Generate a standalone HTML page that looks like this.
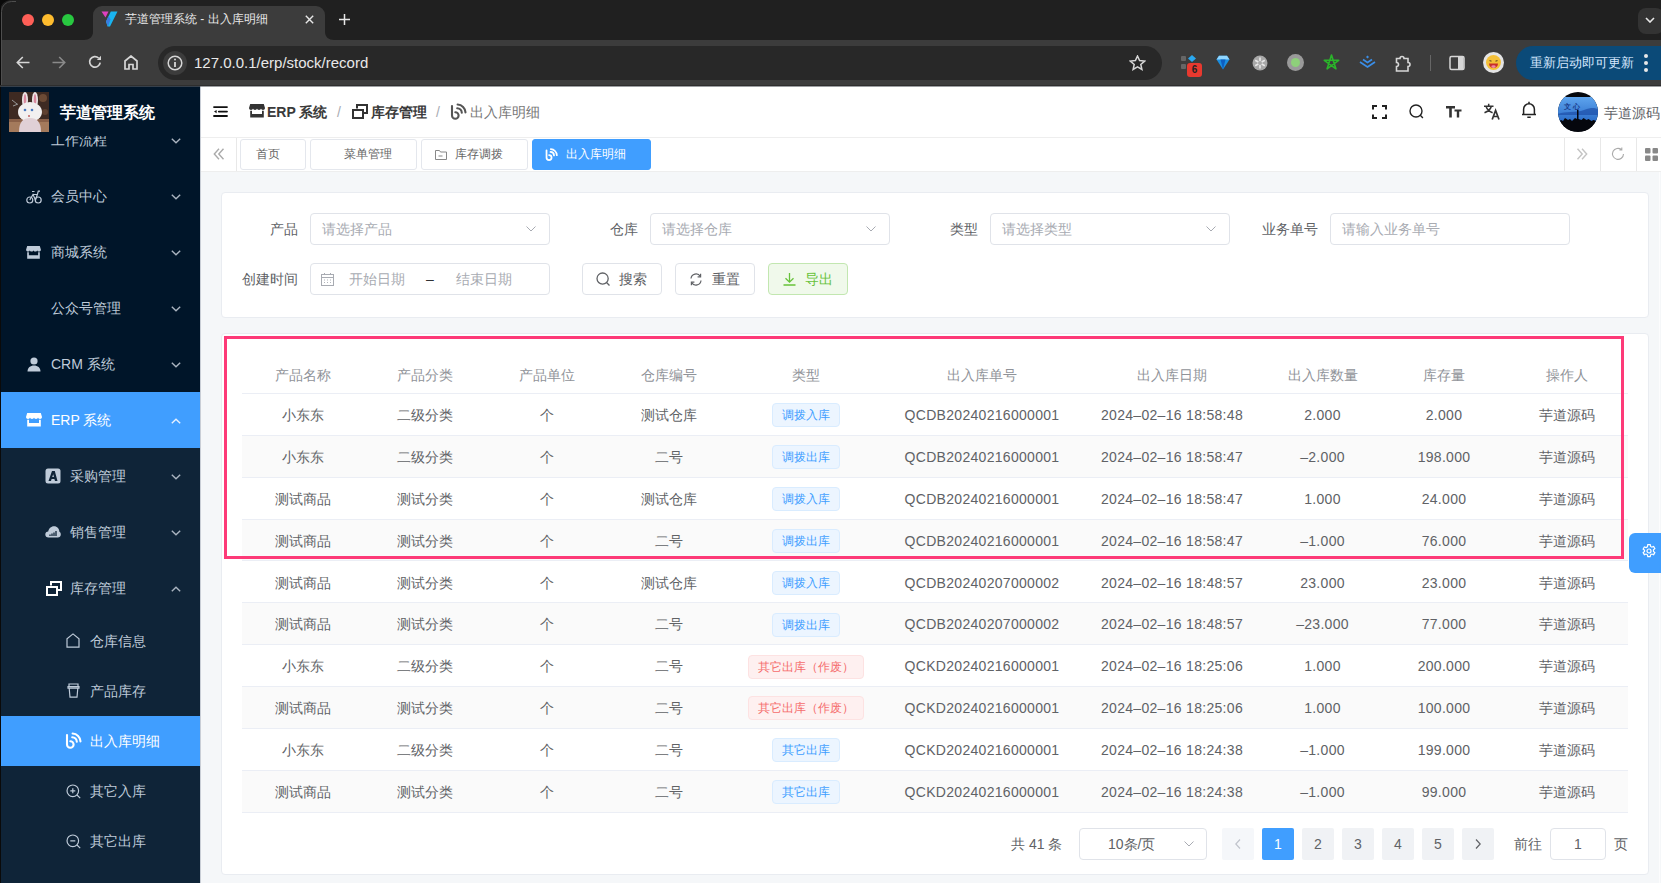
<!DOCTYPE html>
<html><head><meta charset="utf-8">
<style>
*{box-sizing:border-box;margin:0;padding:0}
html,body{width:1661px;height:883px;overflow:hidden}
body{position:relative;background:#f5f7f9;font-family:"Liberation Sans",sans-serif;font-size:14px;color:#606266}
.a{position:absolute}
.ic{position:absolute;display:block}
/* chrome */
#tabbar{left:0;top:0;width:1661px;height:40px;background:#202020}
#toolbar{left:0;top:40px;width:1661px;height:46px;background:#3c3c3c}
/* sidebar */
#side{left:0;top:86px;width:200px;height:797px;background:#001529;overflow:hidden}
.mi{position:absolute;left:1px;width:199px;height:56px;color:#bfcbd9;font-size:14px;line-height:56px}
.sub{background:#0f2438}
.act{background:#409eff;color:#fff}
.mt{position:absolute;white-space:nowrap}
.chev{position:absolute;left:170px;top:26px;width:10px;height:6px}
/* header */
#hdr{left:201px;top:86px;width:1460px;height:52px;background:#fff;border-bottom:1px solid #eee}
#tags{left:201px;top:138px;width:1460px;height:34px;background:#fff;border-bottom:1px solid #eee}
.bc{top:16px;font-size:14px;font-weight:bold;line-height:20px;white-space:nowrap}
.tag{position:absolute;top:1px;height:31px;border:1px solid #e4e7ed;border-radius:3px;font-size:12px;line-height:29px;color:#666;background:#fff}
/* cards */
.card{position:absolute;background:#fff;border:1px solid #e9ecf1;border-radius:4px}
.lbl{position:absolute;font-size:14px;color:#606266;text-align:right;height:32px;line-height:32px;width:68px;padding-right:12px}
.inp{position:absolute;height:32px;width:240px;border:1px solid #e0e3e9;border-radius:4px;background:#fff}
.ph{position:absolute;left:11px;top:0;line-height:30px;font-size:14px;color:#a8abb2;white-space:nowrap}
.btn{position:absolute;height:32px;width:80px;border:1px solid #e0e3e9;border-radius:4px;background:#fff;font-size:14px;color:#606266;line-height:30px}
/* table */
.row{position:absolute;left:242px;width:1386px;height:42px;border-bottom:1px solid #ebeef5}
.row.str{background:#fafafa}
.c{position:absolute;top:0;height:42px;line-height:42px;text-align:center;white-space:nowrap;font-size:14px;color:#606266}
.hd .c{color:#909399;font-weight:500;top:2px}
.dt{display:inline-block;height:24px;line-height:22px;padding:0 9px;font-size:12px;border:1px solid #d9ecff;background:#ecf5ff;color:#409eff;border-radius:4px;vertical-align:middle;position:relative;top:-1px}
.dt.red{border-color:#fde2e2;background:#fef0f0;color:#f56c6c}
.pg{position:absolute;top:828px;width:32px;height:32px;border-radius:2px;background:#f0f2f5;color:#606266;font-size:14px;text-align:center;line-height:32px;font-weight:normal}
</style></head><body>

<!-- ============ BROWSER CHROME ============ -->
<!--CHROME-->
<div id="tabbar" class="a">
 <div class="a" style="left:22px;top:14px;width:12px;height:12px;border-radius:50%;background:#fe5f57"></div>
 <div class="a" style="left:42px;top:14px;width:12px;height:12px;border-radius:50%;background:#febc2e"></div>
 <div class="a" style="left:62px;top:14px;width:12px;height:12px;border-radius:50%;background:#28c840"></div>
 <!-- active tab -->
 <svg class="ic" style="left:84px;top:6px" width="250" height="34" viewBox="0 0 250 34"><path d="M0 34C5 34 9 31 9 26V9A9 9 0 0 1 18 0H232A9 9 0 0 1 241 9V26C241 31 245 34 250 34Z" fill="#3c3c3c"/></svg>
 <svg class="ic" style="left:101px;top:11px" width="17" height="16" viewBox="0 0 17 16"><path d="M0.5 0.5h7L4.5 6.5z" fill="#e040c0"/><path d="M9.8 0.5h6.7L9 15.5H6.5L5 10.5z" fill="#19b4f0"/><path d="M5 10.5L7.5 5l2 3.5L7 15.5z" fill="#3a7be0"/></svg>
 <div class="a" style="left:125px;top:11px;font-size:12px;color:#e8e8e8;line-height:17px;white-space:nowrap">芋道管理系统 - 出入库明细</div>
 <svg class="ic" style="left:305px;top:15px" width="9" height="9" viewBox="0 0 9 9"><path d="M0.8 0.8l7.4 7.4M8.2 0.8L0.8 8.2" stroke="#e8e8e8" stroke-width="1.4"/></svg>
 <svg class="ic" style="left:339px;top:14px" width="11" height="11" viewBox="0 0 11 11"><path d="M5.5 0v11M0 5.5h11" stroke="#e8e8e8" stroke-width="1.5"/></svg>
 <div class="a" style="left:1638px;top:8px;width:26px;height:26px;border-radius:8px;background:#333"></div>
 <svg class="ic" style="left:1645px;top:17px" width="10" height="6" viewBox="0 0 10 6"><path d="M1 1l4 4 4-4" fill="none" stroke="#e8e8e8" stroke-width="1.6"/></svg>
</div>
<div id="toolbar" class="a">
 <svg class="ic" style="left:16px;top:16px" width="14" height="13" viewBox="0 0 14 13" fill="none" stroke="#d6d6d6" stroke-width="1.6"><path d="M13.5 6.5H1.5M6.8 1L1.3 6.5l5.5 5.5"/></svg>
 <svg class="ic" style="left:52px;top:16px" width="14" height="13" viewBox="0 0 14 13" fill="none" stroke="#8a8a8a" stroke-width="1.6"><path d="M0.5 6.5h12M7.2 1l5.5 5.5-5.5 5.5"/></svg>
 <svg class="ic" style="left:88px;top:15px" width="14" height="14" viewBox="0 0 14 14" fill="none" stroke="#d6d6d6" stroke-width="1.7"><path d="M12.2 7.6A5.3 5.3 0 1 1 10.6 3"/><path d="M13 0.8v4.2H8.8z" fill="#d6d6d6" stroke="none"/></svg>
 <svg class="ic" style="left:124px;top:15px" width="14" height="15" viewBox="0 0 14 15" fill="none" stroke="#d6d6d6" stroke-width="1.7"><path d="M1 14V6L7 1l6 5v8H9V9.5H5V14z"/></svg>
 <div class="a" style="left:158px;top:6px;width:1004px;height:34px;border-radius:17px;background:#282828"></div>
 <div class="a" style="left:163px;top:11px;width:24px;height:24px;border-radius:50%;background:#3c3c3c"></div>
 <svg class="ic" style="left:167px;top:15px" width="16" height="16" viewBox="0 0 16 16" fill="none" stroke="#d6d6d6" stroke-width="1.5"><circle cx="8" cy="8" r="6.8"/><path d="M8 7v5" stroke-width="1.8"/><circle cx="8" cy="4.6" r="1" fill="#d6d6d6" stroke="none"/></svg>
 <div class="a" style="left:194px;top:13px;font-size:15px;color:#e8e8e8;line-height:19px;white-space:nowrap">127.0.0.1/erp/stock/record</div>
 <svg class="ic" style="left:1129px;top:15px" width="17" height="16" viewBox="0 0 17 16" fill="none" stroke="#d6d6d6" stroke-width="1.5"><path d="M8.5 1l2.1 4.6 5 0.5-3.8 3.3 1.1 5L8.5 11.8 4.1 14.4l1.1-5L1.4 6.1l5-0.5z"/></svg>
 <!-- extensions -->
 <div class="a" style="left:1181px;top:16px;width:5px;height:5px;border-radius:1px;background:#666"></div>
 <div class="a" style="left:1181px;top:24px;width:5px;height:5px;border-radius:1px;background:#666"></div>
 <svg class="ic" style="left:1188px;top:15px" width="8" height="7" viewBox="0 0 8 7"><path d="M4 0L8 3.5 4 7 0 3.5z" fill="#2aa8f0"/></svg>
 <div class="a" style="left:1187px;top:23px;width:15px;height:14px;border-radius:3px;background:#e8392f;color:#222;font-size:10px;font-weight:bold;text-align:center;line-height:14px">6</div>
 <svg class="ic" style="left:1216px;top:15px" width="14" height="15" viewBox="0 0 14 15"><path d="M0.5 4.5L3 0.8h8l2.5 3.7L7 14.5z" fill="#1a8ee0"/><path d="M3 0.8h8l2.5 3.7h-13z" fill="#8fd6ff"/><path d="M4.5 4.5L7 14.5 9.5 4.5z" fill="#0e5ec0"/></svg>
 <svg class="ic" style="left:1252px;top:15px" width="16" height="16" viewBox="0 0 16 16"><circle cx="8" cy="8" r="7.5" fill="#a8a8a8"/><path d="M8 2.5v11M3.2 5.2l9.6 5.6M3.2 10.8l9.6-5.6" stroke="#e8e8e8" stroke-width="1.6"/><circle cx="8" cy="8" r="2" fill="#a8a8a8"/></svg>
 <div class="a" style="left:1287px;top:14px;width:17px;height:17px;border-radius:50%;background:#9a9a9a"></div>
 <div class="a" style="left:1291px;top:18px;width:9px;height:9px;border-radius:50%;background:#8ed07a"></div>
 <svg class="ic" style="left:1323px;top:14px" width="17" height="17" viewBox="0 0 17 17" fill="none" stroke="#2ab52a" stroke-width="1.6" stroke-linejoin="round"><path d="M8.5 1L12.9 14.8 1.3 6.3H15.7L4.1 14.8Z"/></svg>
 <svg class="ic" style="left:1359px;top:15px" width="17" height="15" viewBox="0 0 17 15" fill="none" stroke="#3a8ee8" stroke-width="1.7"><path d="M1 7l7.5 5L16 7M4 4.5l4.5 3 4.5-3"/><path d="M8.5 0.5l1.5 1.5-1.5 1.5L7 2z" fill="#3a8ee8" stroke="none"/></svg>
 <svg class="ic" style="left:1395px;top:14px" width="18" height="18" viewBox="0 0 18 18" fill="none" stroke="#d6d6d6" stroke-width="1.6"><path d="M1.5 4.5h3.5a2 2 0 0 1 4 0h4v4a2 2 0 0 1 0 4v4.5H1.5V12.5a2 2 0 0 0 0-4z"/></svg>
 <div class="a" style="left:1430px;top:15px;width:1px;height:16px;background:#666"></div>
 <svg class="ic" style="left:1449px;top:15px" width="16" height="16" viewBox="0 0 16 16"><rect x="1" y="1.5" width="14" height="13" rx="1.5" fill="none" stroke="#d6d6d6" stroke-width="1.5"/><rect x="9" y="2" width="5.5" height="12" fill="#d6d6d6"/></svg>
 <svg class="ic" style="left:1483px;top:12px" width="21" height="21" viewBox="0 0 21 21"><circle cx="10.5" cy="10.5" r="10.5" fill="#e4e4e4"/><circle cx="10.5" cy="10.5" r="7.5" fill="#f4c038"/><path d="M6.5 8.5l2 0.8M14.5 8.5l-2 0.8" stroke="#6a4a1a" stroke-width="1.1"/><path d="M6 11.5h9c0 2.8-2 4.6-4.5 4.6S6 14.3 6 11.5z" fill="#c8302a"/><ellipse cx="10.5" cy="14.6" rx="2.2" ry="1.4" fill="#f08aa0"/></svg>
 <div class="a" style="left:1516px;top:6px;width:160px;height:34px;border-radius:17px;background:#0b4a78"></div>
 <div class="a" style="left:1530px;top:13px;font-size:13px;color:#d6e8ff;line-height:19px;white-space:nowrap;font-weight:500">重新启动即可更新</div>
 <div class="a" style="left:1644px;top:14px;width:4px;height:4px;border-radius:50%;background:#e8e8e8"></div>
 <div class="a" style="left:1644px;top:21px;width:4px;height:4px;border-radius:50%;background:#e8e8e8"></div>
 <div class="a" style="left:1644px;top:28px;width:4px;height:4px;border-radius:50%;background:#e8e8e8"></div>
</div>
<!--/CHROME-->

<!-- ============ SIDEBAR ============ -->
<!--SIDE-->
<div id="side" class="a">
 <!-- menu (scrolled) -->
 <div class="mi" style="top:26px"><span class="mt" style="left:50px">工作流程</span><svg class="chev" viewBox="0 0 10 6"><path d="M0.8 0.8L5 4.8L9.2 0.8" fill="none" stroke="#aab4c0" stroke-width="1.4"/></svg></div>
 <div class="mi" style="top:82px">
  <svg class="ic" style="left:25px;top:22px" width="16" height="14" viewBox="0 0 16 14" fill="none" stroke="#bfcbd9" stroke-width="1.2"><circle cx="3.8" cy="10" r="3"/><circle cx="12.2" cy="10" r="3"/><path d="M3.8 10L7 4.5L9.5 10L11.5 4M6 1.5h2.5M11.5 4l0.8-2.8h1.7M7 4.5h4.5"/></svg>
  <span class="mt" style="left:50px">会员中心</span><svg class="chev" viewBox="0 0 10 6"><path d="M0.8 0.8L5 4.8L9.2 0.8" fill="none" stroke="#aab4c0" stroke-width="1.4"/></svg></div>
 <div class="mi" style="top:138px">
  <svg class="ic" style="left:25px;top:22px" width="15" height="13" viewBox="0 0 16 14" fill="#bfcbd9"><path d="M1.2 0H14.8L16 4C16 5.2 15 6 14 6S12 5.3 12 4.6C12 5.3 11 6 10 6S8 5.3 8 4.6C8 5.3 7 6 6 6S4 5.3 4 4.6C4 5.3 3 6 2 6S0 5.2 0 4Z"/><path d="M1.2 6.8H3V10H13V6.8H14.8V13.6H1.2Z"/></svg>
  <span class="mt" style="left:50px">商城系统</span><svg class="chev" viewBox="0 0 10 6"><path d="M0.8 0.8L5 4.8L9.2 0.8" fill="none" stroke="#aab4c0" stroke-width="1.4"/></svg></div>
 <div class="mi" style="top:194px"><span class="mt" style="left:50px">公众号管理</span><svg class="chev" viewBox="0 0 10 6"><path d="M0.8 0.8L5 4.8L9.2 0.8" fill="none" stroke="#aab4c0" stroke-width="1.4"/></svg></div>
 <div class="mi" style="top:250px">
  <svg class="ic" style="left:26px;top:21px" width="14" height="15" viewBox="0 0 14 15" fill="#bfcbd9"><circle cx="7" cy="4" r="3.6"/><path d="M0.5 14.5c0-3.8 2.8-6 6.5-6s6.5 2.2 6.5 6z"/></svg>
  <span class="mt" style="left:50px">CRM 系统</span><svg class="chev" viewBox="0 0 10 6"><path d="M0.8 0.8L5 4.8L9.2 0.8" fill="none" stroke="#aab4c0" stroke-width="1.4"/></svg></div>
 <div class="mi act" style="top:306px">
  <svg class="ic" style="left:25px;top:21px" width="16" height="14" viewBox="0 0 16 14" fill="#fff"><path d="M1.2 0H14.8L16 4C16 5.2 15 6 14 6S12 5.3 12 4.6C12 5.3 11 6 10 6S8 5.3 8 4.6C8 5.3 7 6 6 6S4 5.3 4 4.6C4 5.3 3 6 2 6S0 5.2 0 4Z"/><path d="M1.2 6.8H3V10H13V6.8H14.8V13.6H1.2Z"/></svg>
  <span class="mt" style="left:50px">ERP 系统</span><svg class="chev" viewBox="0 0 10 6"><path d="M0.8 5.2L5 1.2L9.2 5.2" fill="none" stroke="#e6f0ff" stroke-width="1.4"/></svg></div>
 <div class="sub a" style="left:1px;top:362px;width:199px;height:440px"></div>
 <div class="mi" style="top:362px">
  <svg class="ic" style="left:44px;top:20px" width="16" height="16" viewBox="0 0 16 16"><rect x="0.5" y="0.5" width="15" height="15" rx="2.5" fill="#bfcbd9"/><path d="M3.5 13L7 3h2.8L12.5 13H10l-0.6-2H6.6L6 13z M7.2 9h1.8L8.2 6.2z" fill="#0f2438" fill-rule="evenodd"/></svg>
  <span class="mt" style="left:69px">采购管理</span><svg class="chev" viewBox="0 0 10 6"><path d="M0.8 0.8L5 4.8L9.2 0.8" fill="none" stroke="#aab4c0" stroke-width="1.4"/></svg></div>
 <div class="mi" style="top:418px">
  <svg class="ic" style="left:44px;top:21px" width="16" height="13" viewBox="0 0 16 13"><path d="M3.5 12.5C1.6 12.5 0.3 11.2 0.3 9.5S1.6 6.6 3.2 6.6C3.8 3.5 6 1.2 9 1.2c3.3 0 5.4 2.6 5.4 5.6c1 0.4 1.4 1.5 1.4 2.7c0 1.7-1.3 3-3 3z" fill="#bfcbd9"/><path d="M5 11V9.6M7 11V8.6M9 11V7.4M11 11V6" stroke="#0f2438" stroke-width="1.3"/></svg>
  <span class="mt" style="left:69px">销售管理</span><svg class="chev" viewBox="0 0 10 6"><path d="M0.8 0.8L5 4.8L9.2 0.8" fill="none" stroke="#aab4c0" stroke-width="1.4"/></svg></div>
 <div class="mi" style="top:474px">
  <svg class="ic" style="left:45px;top:21px" width="16" height="15" viewBox="0 0 16 15" fill="none" stroke="#fff" stroke-width="2"><path d="M5 4.5V1h10v8h-4"/><rect x="1" y="6" width="10" height="8"/></svg>
  <span class="mt" style="left:69px">库存管理</span><svg class="chev" viewBox="0 0 10 6"><path d="M0.8 5.2L5 1.2L9.2 5.2" fill="none" stroke="#aab4c0" stroke-width="1.4"/></svg></div>
 <div class="mi" style="top:530px;height:50px;line-height:50px">
  <svg class="ic" style="left:65px;top:17px" width="14" height="15" viewBox="0 0 14 15" fill="none" stroke="#bfcbd9" stroke-width="1.2"><path d="M1 14.2V5.8L7 0.9l6 4.9v8.4z"/></svg>
  <span class="mt" style="left:89px">仓库信息</span></div>
 <div class="mi" style="top:580px;height:50px;line-height:50px">
  <svg class="ic" style="left:66px;top:17px" width="13" height="15" viewBox="0 0 13 15" fill="none" stroke="#bfcbd9" stroke-width="1.2"><path d="M2 1h9v2.6H2z M1 3.6h11v1.6H1z M2.2 5.2L3 14.2h7l0.8-9"/></svg>
  <span class="mt" style="left:89px">产品库存</span></div>
 <div class="mi act" style="top:630px;height:50px;line-height:50px">
  <svg class="ic" style="left:64px;top:16px" width="17" height="17" viewBox="0 0 17 17" fill="none" stroke="#fff" stroke-width="2.1" stroke-linecap="round"><path d="M2 3v9.5a3.3 3.3 0 1 0 3.3-3.3"/><path d="M7.2 5.2a4.8 4.8 0 0 1 4.6 4.6"/><path d="M7.6 1.5a8.3 8.3 0 0 1 7.9 7.9"/></svg>
  <span class="mt" style="left:89px">出入库明细</span></div>
 <div class="mi" style="top:680px;height:50px;line-height:50px">
  <svg class="ic" style="left:65px;top:18px" width="15" height="15" viewBox="0 0 15 15" fill="none" stroke="#bfcbd9" stroke-width="1.2"><circle cx="6.8" cy="6.8" r="5.8"/><path d="M11 11l3.2 3.2M4.3 6.8h5M6.8 4.3v5"/></svg>
  <span class="mt" style="left:89px">其它入库</span></div>
 <div class="mi" style="top:730px;height:50px;line-height:50px">
  <svg class="ic" style="left:65px;top:18px" width="15" height="15" viewBox="0 0 15 15" fill="none" stroke="#bfcbd9" stroke-width="1.2"><circle cx="6.8" cy="6.8" r="5.8"/><path d="M11 11l3.2 3.2M4.3 6.8h5"/></svg>
  <span class="mt" style="left:89px">其它出库</span></div>
 <!-- logo -->
 <div class="a" style="left:1px;top:0;width:200px;height:50px;background:#001529"></div>
 <svg class="ic" style="left:9px;top:6px" width="40" height="40" viewBox="0 0 40 40"><rect width="40" height="40" fill="#3e2a22"/><circle cx="34" cy="6" r="4" fill="#6b4a35"/><circle cx="36" cy="20" r="3" fill="#5e4030"/><rect y="27" width="40" height="13" fill="#a47a5c"/><rect y="27" width="40" height="3" fill="#8a6048"/><path d="M3 8l5 4M4 14l5-2" stroke="#999" stroke-width="1"/><ellipse cx="16" cy="8" rx="3" ry="8" fill="#ece6e6"/><ellipse cx="26" cy="8" rx="3" ry="8" fill="#ece6e6"/><ellipse cx="16" cy="8" rx="1.3" ry="6" fill="#d98aa0"/><ellipse cx="26" cy="8" rx="1.3" ry="6" fill="#d98aa0"/><ellipse cx="21" cy="20" rx="12" ry="10" fill="#f2f0f0"/><path d="M10 40c0-10 4-14 11-14s11 4 11 14z" fill="#e0d0d6"/><circle cx="16" cy="18" r="1.3" fill="#4a7ac0"/><circle cx="23" cy="18" r="1.3" fill="#4a7ac0"/><circle cx="20" cy="24" r="1" fill="#c06060"/></svg>
 <div class="a" style="left:60px;top:16px;font-size:16px;font-weight:bold;color:#fff;line-height:22px;white-space:nowrap;letter-spacing:-0.3px">芋道管理系统</div>
 <div class="a" style="left:0;top:0;width:1px;height:797px;background:#111"></div>
</div>
<!--/SIDE-->
<div class="a" style="left:200px;top:86px;width:1px;height:797px;background:#c9ced6"></div>

<!-- ============ HEADER ============ -->
<!--HDR-->
<div id="hdr" class="a">
 <svg class="ic" style="left:12px;top:20px" width="15" height="11" viewBox="0 0 15 11"><path d="M1 1.1h13M5.8 5.6h8.2M1 10h13" stroke="#111" stroke-width="1.8" stroke-linecap="round"/><path d="M1 5.6L3.6 4v3.2z" fill="#111"/></svg>
 <svg class="ic" style="left:48px;top:18px" width="16" height="14" viewBox="0 0 16 14" fill="#333"><path d="M1.2 0H14.8L16 4C16 5.2 15 6 14 6S12 5.3 12 4.6C12 5.3 11 6 10 6S8 5.3 8 4.6C8 5.3 7 6 6 6S4 5.3 4 4.6C4 5.3 3 6 2 6S0 5.2 0 4Z"/><path d="M1.2 6.8H3V10H13V6.8H14.8V13.6H1.2Z"/></svg>
 <div class="a bc" style="left:66px;color:#3a3a3a">ERP 系统</div>
 <div class="a bc" style="left:136px;color:#a8abb2;font-weight:normal">/</div>
 <svg class="ic" style="left:151px;top:18px" width="16" height="15" viewBox="0 0 16 15" fill="none" stroke="#333" stroke-width="2"><path d="M5 4.5V1h10v8h-4"/><rect x="1" y="6" width="10" height="8"/></svg>
 <div class="a bc" style="left:170px;color:#3a3a3a">库存管理</div>
 <div class="a bc" style="left:235px;color:#a8abb2;font-weight:normal">/</div>
 <svg class="ic" style="left:249px;top:17px" width="17" height="17" viewBox="0 0 17 17" fill="none" stroke="#555" stroke-width="2.1" stroke-linecap="round"><path d="M2 3v9.5a3.3 3.3 0 1 0 3.3-3.3"/><path d="M7.2 5.2a4.8 4.8 0 0 1 4.6 4.6"/><path d="M7.6 1.5a8.3 8.3 0 0 1 7.9 7.9"/></svg>
 <div class="a bc" style="left:269px;color:#777;font-weight:normal">出入库明细</div>
 <!-- right tools -->
 <svg class="ic" style="left:1171px;top:19px" width="15" height="14" viewBox="0 0 15 14" fill="none" stroke="#222" stroke-width="2"><path d="M1 4.5V1h4M10 1h4v3.5M14 9.5V13h-4M5 13H1V9.5"/></svg>
 <svg class="ic" style="left:1208px;top:18px" width="15" height="15" viewBox="0 0 15 15" fill="none" stroke="#222" stroke-width="1.4"><circle cx="7" cy="7" r="6"/><path d="M11.3 11.3l2.6 2.6"/></svg>
 <svg class="ic" style="left:1245px;top:20px" width="16" height="12" viewBox="0 0 16 12" fill="#333"><path d="M0 0H9V2.4H5.8V11.5H3.2V2.4H0Z"/><path d="M8.5 3.6H15.5V5.6H13.2V11.5H10.8V5.6H8.5Z"/></svg>
 <svg class="ic" style="left:1282px;top:17px" width="18" height="17" viewBox="0 0 18 17" fill="none" stroke="#333" stroke-width="1.5"><path d="M1 3.2h9.5M5.7 0.8v2.4M3 3.2c0.9 2.9 3.1 5.1 6.6 6.6M8.4 3.2C7.6 6 5.2 8.2 1.5 9.8"/><path d="M9.2 16.5l3.4-9 3.4 9M10.4 13.5h4.4" stroke-width="1.7"/></svg>
 <svg class="ic" style="left:1320px;top:15px" width="16" height="18" viewBox="0 0 16 18" fill="none" stroke="#222" stroke-width="1.5"><path d="M8 0.8v1.6M2.6 13.2V8.2a5.4 5.4 0 0 1 10.8 0v5M1 13.5h14M6.3 16.2h3.4"/></svg>
  <svg class="ic" style="left:1357px;top:6px" width="40" height="40" viewBox="0 0 40 40"><defs><clipPath id="avc"><circle cx="20" cy="20" r="20"/></clipPath><linearGradient id="avg" x1="0" y1="0" x2="0" y2="1"><stop offset="0" stop-color="#5ea4ee"/><stop offset="1" stop-color="#2a6cc8"/></linearGradient></defs><g clip-path="url(#avc)"><rect width="40" height="40" fill="#05070d"/><rect y="5" width="40" height="25" fill="url(#avg)"/><path d="M0 22c8-3 18-1 26-4s10-2 14-1v6H0z" fill="#1d4fa8" opacity="0.7"/><path d="M0 30l3-2 2 1 2-3 3 2 2-1 2 2 3-3 2 1v-9h1.5v9l3 1 2-2 3 2 2-1 3 2 2-1 3 1v10H0z" fill="#05070d"/><text x="6" y="17" font-size="7" font-weight="bold" fill="#1a3a8a" font-family="Liberation Sans,sans-serif">文 心</text></g></svg>
 <div class="a" style="left:1403px;top:17px;font-size:14px;color:#606266;line-height:20px;white-space:nowrap">芋道源码</div>
</div>
<div id="tags" class="a">
 <div class="a" style="left:35px;top:0;width:1px;height:33px;background:#e8e8e8"></div>
 <svg class="ic" style="left:12px;top:10px" width="12" height="12" viewBox="0 0 12 12" fill="none" stroke="#ababab" stroke-width="1.4"><path d="M6 0.8L1.3 6 6 11.2M10.5 0.8L5.8 6l4.7 5.2"/></svg>
 <div class="tag" style="left:39px;width:66px"><span style="position:absolute;left:15px">首页</span></div>
 <div class="tag" style="left:109px;width:107px"><span style="position:absolute;left:33px">菜单管理</span></div>
 <div class="tag" style="left:220px;width:107px"><svg style="position:absolute;left:13px;top:10px" width="12" height="10" viewBox="0 0 12 10" fill="none" stroke="#888" stroke-width="1"><path d="M0.5 0.5h4l1 1.5h6v7.5h-11z M3.5 6h4"/></svg><span style="position:absolute;left:33px">库存调拨</span></div>
 <div class="tag" style="left:331px;width:119px;background:#409eff;border-color:#409eff;color:#fff"><svg style="position:absolute;left:12px;top:8px" width="13" height="13" viewBox="0 0 17 17" fill="none" stroke="#fff" stroke-width="2.3" stroke-linecap="round"><path d="M2 3v9.5a3.3 3.3 0 1 0 3.3-3.3"/><path d="M7.2 5.2a4.8 4.8 0 0 1 4.6 4.6"/><path d="M7.6 1.5a8.3 8.3 0 0 1 7.9 7.9"/></svg><span style="position:absolute;left:33px">出入库明细</span></div>
 <div class="a" style="left:1363px;top:0;width:1px;height:33px;background:#e8e8e8"></div>
 <div class="a" style="left:1399px;top:0;width:1px;height:33px;background:#e8e8e8"></div>
 <div class="a" style="left:1435px;top:0;width:1px;height:33px;background:#e8e8e8"></div>
 <svg class="ic" style="left:1375px;top:10px" width="12" height="12" viewBox="0 0 12 12" fill="none" stroke="#c4c4c4" stroke-width="1.4"><path d="M1.5 0.8L6.2 6 1.5 11.2M6 0.8L10.7 6 6 11.2"/></svg>
 <svg class="ic" style="left:1410px;top:9px" width="14" height="14" viewBox="0 0 14 14" fill="none" stroke="#aaa" stroke-width="1.1"><path d="M12.5 7A5.5 5.5 0 1 1 10.5 2.6M10.8 0.6v2.4H8.4"/></svg>
 <svg class="ic" style="left:1444px;top:10px" width="13" height="13" viewBox="0 0 13 13" fill="#888"><rect x="0" y="0" width="5.5" height="5.5" rx="1"/><rect x="7.5" y="0" width="5.5" height="5.5" rx="1"/><rect x="0" y="7.5" width="5.5" height="5.5" rx="1"/><rect x="7.5" y="7.5" width="5.5" height="5.5" rx="1"/></svg>
</div>
<!--/HDR-->

<!-- ============ SEARCH CARD ============ -->
<div class="card" style="left:221px;top:192px;width:1428px;height:126px"></div>
<!--FORM-->
<div class="lbl" style="left:242px;top:213px">产品</div>
<div class="inp" style="left:310px;top:213px"><span class="ph">请选择产品</span><svg class="ic" style="left:215px;top:12px" width="10" height="6" viewBox="0 0 10 6"><path d="M0.5 0.5L5 5L9.5 0.5" fill="none" stroke="#a8abb2" stroke-width="1"/></svg></div>
<div class="lbl" style="left:582px;top:213px">仓库</div>
<div class="inp" style="left:650px;top:213px"><span class="ph">请选择仓库</span><svg class="ic" style="left:215px;top:12px" width="10" height="6" viewBox="0 0 10 6"><path d="M0.5 0.5L5 5L9.5 0.5" fill="none" stroke="#a8abb2" stroke-width="1"/></svg></div>
<div class="lbl" style="left:922px;top:213px">类型</div>
<div class="inp" style="left:990px;top:213px"><span class="ph">请选择类型</span><svg class="ic" style="left:215px;top:12px" width="10" height="6" viewBox="0 0 10 6"><path d="M0.5 0.5L5 5L9.5 0.5" fill="none" stroke="#a8abb2" stroke-width="1"/></svg></div>
<div class="lbl" style="left:1262px;top:213px">业务单号</div>
<div class="inp" style="left:1330px;top:213px"><span class="ph">请输入业务单号</span></div>
<div class="lbl" style="left:222px;top:263px;width:88px">创建时间</div>
<div class="inp" style="left:310px;top:263px">
 <svg class="ic" style="left:10px;top:9px" width="13" height="13" viewBox="0 0 13 13" fill="none" stroke="#a8abb2" stroke-width="1"><rect x="0.5" y="1.5" width="12" height="11"/><path d="M0.5 4.5h12M3.5 0v2M9.5 0v2"/><path d="M3 7h1M6 7h1M9 7h1M3 9.5h1M6 9.5h1M9 9.5h1" stroke-width="0.9"/></svg>
 <span class="ph" style="left:38px">开始日期</span>
 <span class="ph" style="left:115px;color:#303133">–</span>
 <span class="ph" style="left:145px">结束日期</span>
</div>
<div class="btn" style="left:582px;top:263px"><svg class="ic" style="left:13px;top:8px" width="15" height="15" viewBox="0 0 15 15" fill="none" stroke="#606266" stroke-width="1.3"><circle cx="6.6" cy="6.6" r="5.6"/><path d="M10.8 10.8l2.7 2.7"/></svg><span class="a" style="left:36px;font-weight:500">搜索</span></div>
<div class="btn" style="left:675px;top:263px"><svg class="ic" style="left:13px;top:9px" width="14" height="13" viewBox="0 0 14 13" fill="none" stroke="#606266" stroke-width="1.2"><path d="M2 5.5A5 5 0 0 1 11.3 3.4M12 7.5A5 5 0 0 1 2.7 9.6"/><path d="M11.6 0.8v3h-3M2.4 12.2v-3h3"/></svg><span class="a" style="left:36px;font-weight:500">重置</span></div>
<div class="btn" style="left:768px;top:263px;background:#f0f9eb;border-color:#c2e7b0;color:#67c23a"><svg class="ic" style="left:14px;top:8px" width="13" height="14" viewBox="0 0 13 14" fill="none" stroke="#67c23a" stroke-width="1.3"><path d="M6.5 1v9M2.5 6.2l4 4 4-4M0.5 13h12"/></svg><span class="a" style="left:36px;font-weight:500">导出</span></div>

<!--/FORM-->

<!-- ============ TABLE CARD ============ -->
<div class="card" style="left:221px;top:333px;width:1428px;height:542px"></div>
<!--TABLE-->
<div class="row hd" style="top:352px"><div class="c" style="left:0px;width:122px">产品名称</div><div class="c" style="left:122px;width:122px">产品分类</div><div class="c" style="left:244px;width:122px">产品单位</div><div class="c" style="left:366px;width:122px">仓库编号</div><div class="c" style="left:488px;width:152px">类型</div><div class="c" style="left:640px;width:200px">出入库单号</div><div class="c" style="left:840px;width:180px">出入库日期</div><div class="c" style="left:1020px;width:121px">出入库数量</div><div class="c" style="left:1141px;width:122px">库存量</div><div class="c" style="left:1263px;width:123px">操作人</div></div>
<div class="row" style="top:393.9px;height:41.9px"><div class="c" style="left:0px;width:122px">小东东</div><div class="c" style="left:122px;width:122px">二级分类</div><div class="c" style="left:244px;width:122px">个</div><div class="c" style="left:366px;width:122px">测试仓库</div><div class="c" style="left:488px;width:152px"><span class="dt">调拨入库</span></div><div class="c" style="left:640px;width:200px;letter-spacing:0.3px">QCDB20240216000001</div><div class="c" style="left:840px;width:180px;letter-spacing:0.3px">2024&#8211;02&#8211;16 18:58:48</div><div class="c" style="left:1020px;width:121px;letter-spacing:0.3px">2.000</div><div class="c" style="left:1141px;width:122px;letter-spacing:0.3px">2.000</div><div class="c" style="left:1263px;width:123px">芋道源码</div></div>
<div class="row str" style="top:435.8px;height:41.9px"><div class="c" style="left:0px;width:122px">小东东</div><div class="c" style="left:122px;width:122px">二级分类</div><div class="c" style="left:244px;width:122px">个</div><div class="c" style="left:366px;width:122px">二号</div><div class="c" style="left:488px;width:152px"><span class="dt">调拨出库</span></div><div class="c" style="left:640px;width:200px;letter-spacing:0.3px">QCDB20240216000001</div><div class="c" style="left:840px;width:180px;letter-spacing:0.3px">2024&#8211;02&#8211;16 18:58:47</div><div class="c" style="left:1020px;width:121px;letter-spacing:0.3px">&#8211;2.000</div><div class="c" style="left:1141px;width:122px;letter-spacing:0.3px">198.000</div><div class="c" style="left:1263px;width:123px">芋道源码</div></div>
<div class="row" style="top:477.7px;height:41.9px"><div class="c" style="left:0px;width:122px">测试商品</div><div class="c" style="left:122px;width:122px">测试分类</div><div class="c" style="left:244px;width:122px">个</div><div class="c" style="left:366px;width:122px">测试仓库</div><div class="c" style="left:488px;width:152px"><span class="dt">调拨入库</span></div><div class="c" style="left:640px;width:200px;letter-spacing:0.3px">QCDB20240216000001</div><div class="c" style="left:840px;width:180px;letter-spacing:0.3px">2024&#8211;02&#8211;16 18:58:47</div><div class="c" style="left:1020px;width:121px;letter-spacing:0.3px">1.000</div><div class="c" style="left:1141px;width:122px;letter-spacing:0.3px">24.000</div><div class="c" style="left:1263px;width:123px">芋道源码</div></div>
<div class="row str" style="top:519.6px;height:41.9px"><div class="c" style="left:0px;width:122px">测试商品</div><div class="c" style="left:122px;width:122px">测试分类</div><div class="c" style="left:244px;width:122px">个</div><div class="c" style="left:366px;width:122px">二号</div><div class="c" style="left:488px;width:152px"><span class="dt">调拨出库</span></div><div class="c" style="left:640px;width:200px;letter-spacing:0.3px">QCDB20240216000001</div><div class="c" style="left:840px;width:180px;letter-spacing:0.3px">2024&#8211;02&#8211;16 18:58:47</div><div class="c" style="left:1020px;width:121px;letter-spacing:0.3px">&#8211;1.000</div><div class="c" style="left:1141px;width:122px;letter-spacing:0.3px">76.000</div><div class="c" style="left:1263px;width:123px">芋道源码</div></div>
<div class="row" style="top:561.5px;height:41.9px"><div class="c" style="left:0px;width:122px">测试商品</div><div class="c" style="left:122px;width:122px">测试分类</div><div class="c" style="left:244px;width:122px">个</div><div class="c" style="left:366px;width:122px">测试仓库</div><div class="c" style="left:488px;width:152px"><span class="dt">调拨入库</span></div><div class="c" style="left:640px;width:200px;letter-spacing:0.3px">QCDB20240207000002</div><div class="c" style="left:840px;width:180px;letter-spacing:0.3px">2024&#8211;02&#8211;16 18:48:57</div><div class="c" style="left:1020px;width:121px;letter-spacing:0.3px">23.000</div><div class="c" style="left:1141px;width:122px;letter-spacing:0.3px">23.000</div><div class="c" style="left:1263px;width:123px">芋道源码</div></div>
<div class="row str" style="top:603.4px;height:41.9px"><div class="c" style="left:0px;width:122px">测试商品</div><div class="c" style="left:122px;width:122px">测试分类</div><div class="c" style="left:244px;width:122px">个</div><div class="c" style="left:366px;width:122px">二号</div><div class="c" style="left:488px;width:152px"><span class="dt">调拨出库</span></div><div class="c" style="left:640px;width:200px;letter-spacing:0.3px">QCDB20240207000002</div><div class="c" style="left:840px;width:180px;letter-spacing:0.3px">2024&#8211;02&#8211;16 18:48:57</div><div class="c" style="left:1020px;width:121px;letter-spacing:0.3px">&#8211;23.000</div><div class="c" style="left:1141px;width:122px;letter-spacing:0.3px">77.000</div><div class="c" style="left:1263px;width:123px">芋道源码</div></div>
<div class="row" style="top:645.3px;height:41.9px"><div class="c" style="left:0px;width:122px">小东东</div><div class="c" style="left:122px;width:122px">二级分类</div><div class="c" style="left:244px;width:122px">个</div><div class="c" style="left:366px;width:122px">二号</div><div class="c" style="left:488px;width:152px"><span class="dt red">其它出库（作废）</span></div><div class="c" style="left:640px;width:200px;letter-spacing:0.3px">QCKD20240216000001</div><div class="c" style="left:840px;width:180px;letter-spacing:0.3px">2024&#8211;02&#8211;16 18:25:06</div><div class="c" style="left:1020px;width:121px;letter-spacing:0.3px">1.000</div><div class="c" style="left:1141px;width:122px;letter-spacing:0.3px">200.000</div><div class="c" style="left:1263px;width:123px">芋道源码</div></div>
<div class="row str" style="top:687.2px;height:41.9px"><div class="c" style="left:0px;width:122px">测试商品</div><div class="c" style="left:122px;width:122px">测试分类</div><div class="c" style="left:244px;width:122px">个</div><div class="c" style="left:366px;width:122px">二号</div><div class="c" style="left:488px;width:152px"><span class="dt red">其它出库（作废）</span></div><div class="c" style="left:640px;width:200px;letter-spacing:0.3px">QCKD20240216000001</div><div class="c" style="left:840px;width:180px;letter-spacing:0.3px">2024&#8211;02&#8211;16 18:25:06</div><div class="c" style="left:1020px;width:121px;letter-spacing:0.3px">1.000</div><div class="c" style="left:1141px;width:122px;letter-spacing:0.3px">100.000</div><div class="c" style="left:1263px;width:123px">芋道源码</div></div>
<div class="row" style="top:729.1px;height:41.9px"><div class="c" style="left:0px;width:122px">小东东</div><div class="c" style="left:122px;width:122px">二级分类</div><div class="c" style="left:244px;width:122px">个</div><div class="c" style="left:366px;width:122px">二号</div><div class="c" style="left:488px;width:152px"><span class="dt">其它出库</span></div><div class="c" style="left:640px;width:200px;letter-spacing:0.3px">QCKD20240216000001</div><div class="c" style="left:840px;width:180px;letter-spacing:0.3px">2024&#8211;02&#8211;16 18:24:38</div><div class="c" style="left:1020px;width:121px;letter-spacing:0.3px">&#8211;1.000</div><div class="c" style="left:1141px;width:122px;letter-spacing:0.3px">199.000</div><div class="c" style="left:1263px;width:123px">芋道源码</div></div>
<div class="row str" style="top:771.0px;height:41.9px"><div class="c" style="left:0px;width:122px">测试商品</div><div class="c" style="left:122px;width:122px">测试分类</div><div class="c" style="left:244px;width:122px">个</div><div class="c" style="left:366px;width:122px">二号</div><div class="c" style="left:488px;width:152px"><span class="dt">其它出库</span></div><div class="c" style="left:640px;width:200px;letter-spacing:0.3px">QCKD20240216000001</div><div class="c" style="left:840px;width:180px;letter-spacing:0.3px">2024&#8211;02&#8211;16 18:24:38</div><div class="c" style="left:1020px;width:121px;letter-spacing:0.3px">&#8211;1.000</div><div class="c" style="left:1141px;width:122px;letter-spacing:0.3px">99.000</div><div class="c" style="left:1263px;width:123px">芋道源码</div></div>
<!--/TABLE-->

<!--PAGER-->
<!-- pagination -->
<div class="a" style="left:1011px;top:834px;font-size:14px;color:#606266;line-height:20px;white-space:nowrap">共 41 条</div>
<div class="inp" style="left:1079px;top:828px;width:128px"><span class="ph" style="left:28px;color:#606266">10条/页</span><svg class="ic" style="left:104px;top:12px" width="10" height="6" viewBox="0 0 10 6"><path d="M0.5 0.5L5 5L9.5 0.5" fill="none" stroke="#a8abb2" stroke-width="1"/></svg></div>
<div class="pg" style="left:1222px;background:#f5f7fa"><svg class="ic" style="left:13px;top:11px" width="6" height="10" viewBox="0 0 6 10"><path d="M5 0.5L0.8 5L5 9.5" fill="none" stroke="#c0c4cc" stroke-width="1.2"/></svg></div>
<div class="pg" style="left:1262px;background:#409eff;color:#fff">1</div>
<div class="pg" style="left:1302px">2</div>
<div class="pg" style="left:1342px">3</div>
<div class="pg" style="left:1382px">4</div>
<div class="pg" style="left:1422px">5</div>
<div class="pg" style="left:1462px"><svg class="ic" style="left:13px;top:11px" width="6" height="10" viewBox="0 0 6 10"><path d="M1 0.5L5.2 5L1 9.5" fill="none" stroke="#606266" stroke-width="1.2"/></svg></div>
<div class="a" style="left:1514px;top:834px;font-size:14px;color:#606266;line-height:20px;white-space:nowrap">前往</div>
<div class="inp" style="left:1550px;top:828px;width:56px"><span class="ph" style="left:0;width:54px;text-align:center;color:#606266">1</span></div>
<div class="a" style="left:1614px;top:834px;font-size:14px;color:#606266;line-height:20px;white-space:nowrap">页</div>

<!--/PAGER-->
<!--OVERLAY-->
<div class="a" style="left:1659px;top:172px;width:1px;height:711px;background:#fcfcfd"></div>
<!-- settings float -->
<div class="a" style="left:1629px;top:533px;width:32px;height:40px;background:#409eff;border-radius:6px 0 0 6px"><svg class="ic" style="left:13px;top:11px" width="14" height="14" viewBox="0 0 14 14" fill="none" stroke="#fff" stroke-width="1.2"><path d="M5.8 0.6h2.4l0.4 1.8 1.3 0.75 1.75-0.6 1.2 2.1-1.4 1.2v1.5l1.4 1.2-1.2 2.1-1.75-0.6-1.3 0.75-0.4 1.8H5.8l-0.4-1.8-1.3-0.75-1.75 0.6-1.2-2.1 1.4-1.2V6.25l-1.4-1.2 1.2-2.1 1.75 0.6 1.3-0.75z"/><circle cx="7" cy="7" r="2"/></svg></div>

<!-- annotation -->
<div class="a" style="left:224px;top:336px;width:1400px;height:223px;border:3px solid #fd3a78"></div>
<div class="a" style="left:0;top:0;width:1px;height:883px;background:#0a0a0a"></div>
<svg class="ic" style="left:0;top:0" width="16" height="86" viewBox="0 0 16 86"><path d="M0 0H12A11 11 0 0 0 0 11Z" fill="#0a0a0a"/><path d="M1.5 86V11.5A10 10 0 0 1 11.5 1.5H16" fill="none" stroke="#4e4e4e" stroke-width="1"/></svg>
<div class="a" style="left:0;top:85px;width:1661px;height:1px;background:#2e2e2e"></div>
<div class="a" style="left:0;top:86px;width:1661px;height:1px;background:#5a5e62;opacity:0.6"></div>
<!--/OVERLAY-->
</body></html>
